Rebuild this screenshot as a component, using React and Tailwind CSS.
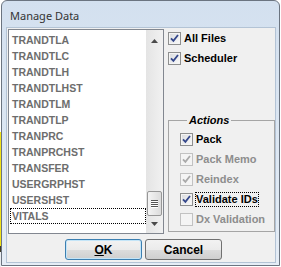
const tables = [
  "TRANDTLA",
  "TRANDTLC",
  "TRANDTLH",
  "TRANDTLHST",
  "TRANDTLM",
  "TRANDTLP",
  "TRANPRC",
  "TRANPRCHST",
  "TRANSFER",
  "USERGRPHST",
  "USERSHST",
  "VITALS",
];

function CheckBox({ checked, disabled }) {
  return (
    <span
      className={
        disabled
          ? "flex h-[13px] w-[13px] shrink-0 items-center justify-center border border-[#c2c2c2] bg-[#f4f4f4]"
          : "flex h-[13px] w-[13px] shrink-0 items-center justify-center border border-[#8e8f8f] bg-[linear-gradient(135deg,#d9dbde,#fafafa)] shadow-[inset_0_0_0_1px_#f4f4f4]"
      }
    >
      {checked && (
        <svg width="9" height="9" viewBox="0 0 9 9">
          <path
            d="M1 4.3 L3.4 6.8 L8 1"
            fill="none"
            stroke={disabled ? "#a9a9a9" : "#34478a"}
            strokeWidth="1.8"
          />
        </svg>
      )}
    </span>
  );
}

function Option({ label, checked, disabled, focused }) {
  return (
    <div className="flex h-[20px] items-center gap-[3px]">
      <CheckBox checked={checked} disabled={disabled} />
      <span
        className={
          focused
            ? "text-[11px] leading-[13px] font-bold text-black outline-1 outline-dotted outline-black"
            : disabled
              ? "text-[11px] leading-[13px] font-bold text-[#8d8d8d]"
              : "text-[11px] leading-[13px] font-bold text-black"
        }
      >
        {label}
      </span>
    </div>
  );
}

function ScrollBar() {
  return (
    <div className="flex w-[17px] flex-col bg-[linear-gradient(90deg,#e4e4e4,#f1f1f1)]">
      <div className="flex h-[17px] justify-center pt-[9px]">
        <svg width="7" height="4" viewBox="0 0 7 4">
          <path d="M0 4 L3.5 0 L7 4Z" fill="#4a4a4a" />
        </svg>
      </div>
      <div className="flex-1" />
      {/* thumb */}
      <div className="mx-[1px] flex h-[25px] flex-col items-center justify-center rounded-[2px] border border-[#979797] bg-[linear-gradient(90deg,#f4f4f4,#dcdcdc)]">
        <div className="h-[2px] w-[7px] border-t border-[#555] bg-white" />
        <div className="h-[2px] w-[7px] border-t border-[#555] bg-white" />
        <div className="h-[2px] w-[7px] border-t border-[#555] bg-white" />
        <div className="h-[2px] w-[7px] border-t border-[#555] bg-white" />
      </div>
      <div className="flex h-[17px] justify-center pt-[6px]">
        <svg width="7" height="4" viewBox="0 0 7 4">
          <path d="M0 0 L3.5 4 L7 0Z" fill="#4a4a4a" />
        </svg>
      </div>
    </div>
  );
}

export default function App() {
  return (
    <div className="flex h-[267px] w-[281px] bg-white font-['Liberation_Sans',Arial,sans-serif]">
      {/* whatever is behind the window */}
      <div className="flex w-[1px] flex-col">
        <div className="h-[132px] bg-white" />
        <div className="h-[114px] bg-[#f2e21b]" />
        <div className="h-[6px] bg-[#3d3b2a]" />
        <div className="flex-1 bg-[#e9edf2]" />
      </div>

      {/* WINDOW */}
      <div className="flex h-[266px] w-[279px] flex-col rounded-t-[6px] border border-[#6b7480] bg-[linear-gradient(#d3e0ef,#e5edf6)]">
        {/* TITLE */}
        <div className="h-[26px] pt-[7px] pl-[8px] font-['Noto_Sans',sans-serif] text-[11px] leading-[16px] text-[#333]">
          Manage Data
        </div>

        <div className="flex pl-[4px]">
          <div className="flex h-[236px] w-[270px] flex-col border border-[#b3c3d5] bg-[#f0f0f0]">
            <div className="flex">
              {/* LIST */}
              <div className="mt-[1px] ml-[1px] flex h-[205px] w-[156px] border border-[#828790] bg-white">
                <div className="flex w-[137px] flex-col pt-[2px]">
                  {tables.map((t) => (
                    <div
                      key={t}
                      className={
                        t === "VITALS"
                          ? "ml-[1px] h-[16px] border border-dotted border-black pl-[1px] text-[10.5px] leading-[14px] font-bold text-[#6d6d6d]"
                          : "ml-[1px] h-[16px] border border-transparent pl-[1px] text-[10.5px] leading-[14px] font-bold text-[#6d6d6d]"
                      }
                    >
                      {t}
                    </div>
                  ))}
                </div>
                <ScrollBar />
              </div>

              {/* OPTIONS */}
              <div className="ml-[4px] flex w-[107px] flex-col">
                <Option label="All Files" checked />
                <Option label="Scheduler" checked />

                <fieldset className="mt-[45px] border border-[#a5a5a5] pt-[2px] pb-[2px] pl-[11px]">
                  <legend className="ml-[7px] px-[2px] text-[11px] leading-[14px] font-bold italic text-black">
                    Actions
                  </legend>
                  <Option label="Pack" checked />
                  <Option label="Pack Memo" checked disabled />
                  <Option label="Reindex" checked disabled />
                  <Option label="Validate IDs" checked focused />
                  <Option label="Dx Validation" disabled />
                </fieldset>
              </div>
            </div>

            {/* BUTTONS */}
            <div className="mt-[5px] flex gap-[3px] pl-[58px]">
              <button className="h-[21px] w-[77px] rounded-[3px] border border-[#3c7fb1] bg-[linear-gradient(#f2f2f2_0%,#ebebeb_50%,#dddddd_50%,#cfcfcf_100%)] text-[12px] font-bold text-black shadow-[inset_0_0_0_1px_#c4e5f8]">
                <span className="underline">O</span>K
              </button>
              <button className="h-[21px] w-[77px] rounded-[3px] border border-[#707070] bg-[linear-gradient(#f2f2f2_0%,#ebebeb_50%,#dddddd_50%,#cfcfcf_100%)] text-[12px] font-bold text-black">
                Cancel
              </button>
            </div>
          </div>
        </div>
      </div>
    </div>
  );
}
